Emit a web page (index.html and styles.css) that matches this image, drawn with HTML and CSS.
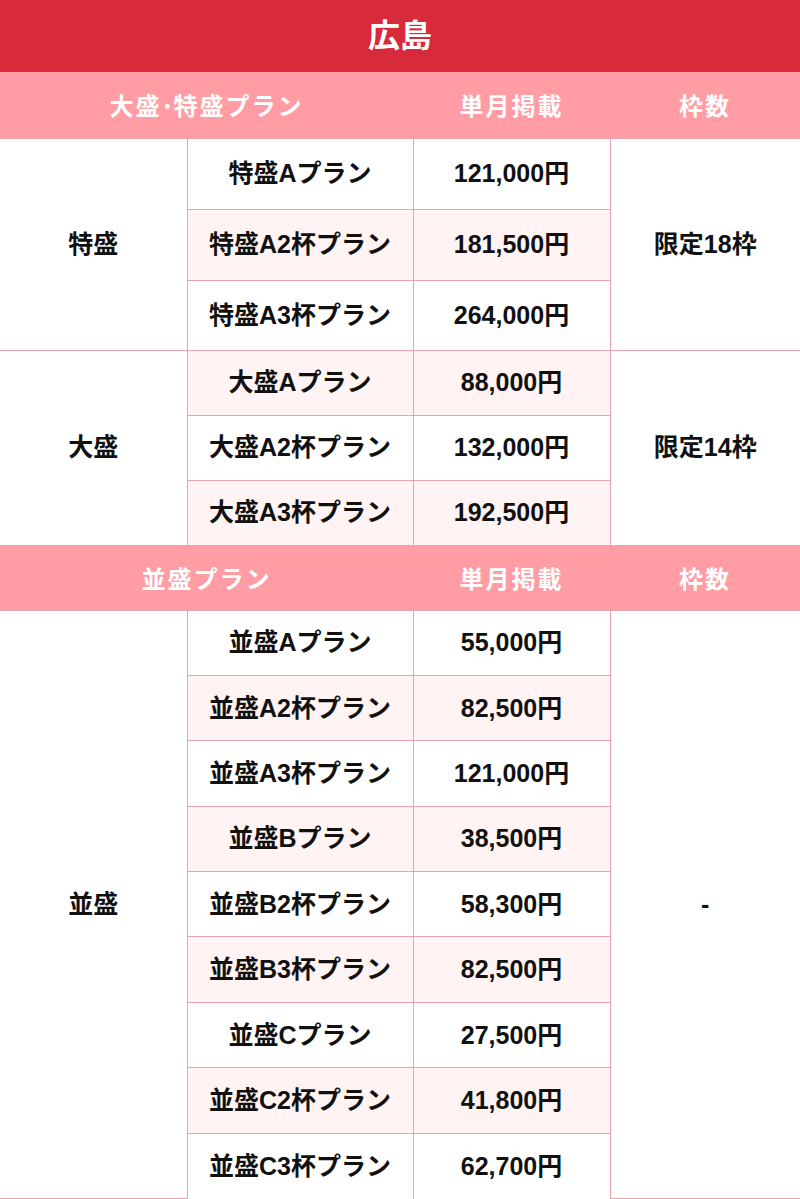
FILE: index.html
```html
<!DOCTYPE html>
<html lang="ja">
<head>
<meta charset="utf-8">
<title>広島</title>
<link rel="stylesheet" href="styles.css">
</head>
<body>
<table class="plans">
  <colgroup>
    <col class="c1"><col class="c2"><col class="c3"><col class="c4">
  </colgroup>
  <thead>
    <tr class="title-row"><th colspan="4" class="title">広島</th></tr>
  </thead>
  <tbody class="big">
    <tr class="head"><th colspan="2">大盛<span class="dot">･</span>特盛プラン</th><th>単月掲載</th><th>枠数</th></tr>
    <tr class="r1"><td rowspan="3" class="grp">特盛</td><td>特盛Aプラン</td><td>121,000円</td><td rowspan="3" class="lim">限定18枠</td></tr>
    <tr class="r2 alt"><td>特盛A2杯プラン</td><td>181,500円</td></tr>
    <tr class="r3 last"><td>特盛A3杯プラン</td><td>264,000円</td></tr>
    <tr class="s alt"><td rowspan="3" class="grp">大盛</td><td>大盛Aプラン</td><td>88,000円</td><td rowspan="3" class="lim">限定14枠</td></tr>
    <tr class="s"><td>大盛A2杯プラン</td><td>132,000円</td></tr>
    <tr class="s alt"><td>大盛A3杯プラン</td><td>192,500円</td></tr>
  </tbody>
  <tbody class="normal">
    <tr class="head h2"><th colspan="2">並盛プラン</th><th>単月掲載</th><th>枠数</th></tr>
    <tr class="n"><td rowspan="9" class="grp">並盛</td><td>並盛Aプラン</td><td>55,000円</td><td rowspan="9" class="lim">-</td></tr>
    <tr class="n alt"><td>並盛A2杯プラン</td><td>82,500円</td></tr>
    <tr class="n"><td>並盛A3杯プラン</td><td>121,000円</td></tr>
    <tr class="n alt"><td>並盛Bプラン</td><td>38,500円</td></tr>
    <tr class="n"><td>並盛B2杯プラン</td><td>58,300円</td></tr>
    <tr class="n alt"><td>並盛B3杯プラン</td><td>82,500円</td></tr>
    <tr class="n"><td>並盛Cプラン</td><td>27,500円</td></tr>
    <tr class="n alt"><td>並盛C2杯プラン</td><td>41,800円</td></tr>
    <tr class="n"><td>並盛C3杯プラン</td><td>62,700円</td></tr>
  </tbody>
</table>
</body>
</html>
```

FILE: styles.css
```css
html, body {
  margin: 0;
  padding: 0;
  background: #ffffff;
}

body {
  font-family: "Liberation Sans", "Noto Sans CJK JP", sans-serif;
  color: #111111;
}

.plans {
  width: 800px;
  border-collapse: collapse;
  table-layout: fixed;
  font-weight: bold;
}

.c1 { width: 187px; }
.c2 { width: 226px; }
.c3 { width: 197px; }
.c4 { width: 190px; }

.title-row { height: 72px; }

.title {
  background: #d72a3b;
  color: #ffffff;
  font-size: 32px;
  font-weight: bold;
  text-align: center;
  padding: 0;
  line-height: 1;
}

.head { height: 66px; }
.head.h2 { height: 65px; }

.head th {
  background: #ff9ca4;
  color: #ffffff;
  font-size: 24px;
  letter-spacing: 2px;
  font-weight: bold;
  text-align: center;
  padding: 0;
  border: none;
}

.dot {
  letter-spacing: 0;
}

td {
  font-size: 25px;
  text-align: center;
  vertical-align: middle;
  padding: 0;
  border: 1px solid #e6a4b1;
  line-height: 1;
}

td.grp { border-left: none; }
td.lim { border-right: none; }

.r1, .r2 { height: 71px; }
.r3 { height: 70px; }
.s { height: 65px; }
.n { height: 65.4px; }

.alt td {
  background: #fff3f4;
}

.alt td.grp,
.alt td.lim {
  background: #ffffff;
}

.normal tr.n:last-child td {
  border-bottom: none;
}
```
